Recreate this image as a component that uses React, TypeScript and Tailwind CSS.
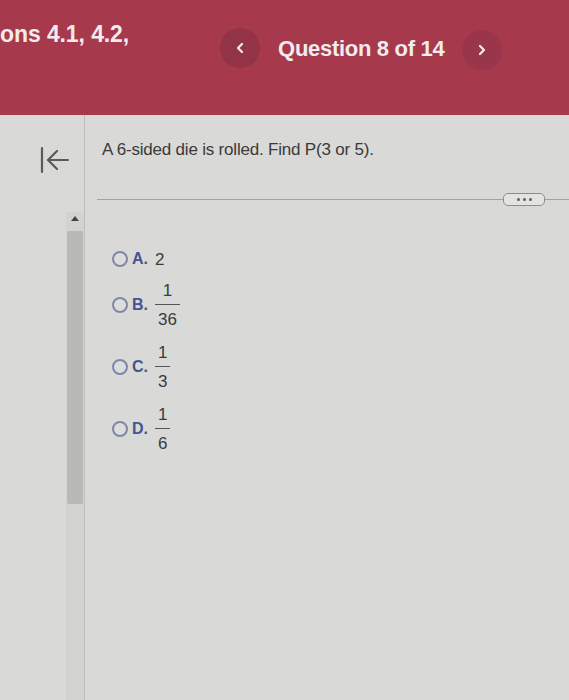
import React from 'react';

function Fraction({ num, den }: { num: string; den: string }) {
  return (
    <span className="inline-flex flex-col items-center leading-none text-[17px] text-[#3b3b3b]">
      <span className="px-[3px] pb-[5px]">{num}</span>
      <span className="self-stretch h-px bg-[#555]" />
      <span className="px-[3px] pt-[6px]">{den}</span>
    </span>
  );
}

function Option({ letter, children }: { letter: string; children: React.ReactNode }) {
  return (
    <div className="flex items-center">
      <span className="w-[16px] h-[16px] rounded-full border-2 border-[#7f86a8] bg-[#dcdcdb]" />
      <span className="ml-[4px] w-[23px] text-[16px] font-bold text-[#44558f]">{letter}.</span>
      {children}
    </div>
  );
}

export default function App() {
  return (
    <div className="w-[569px] h-[700px] overflow-hidden bg-[#d9d9d7] flex flex-col" style={{ fontFamily: '"Liberation Sans", Arial, sans-serif' }}>
      {/* Header */}
      <header className="h-[115px] shrink-0 bg-[#a7394d] flex items-start text-[#f3ecee]">
        <div className="pt-[17px] text-[23px] font-bold whitespace-nowrap tracking-[-0.1px]">ons 4.1, 4.2,</div>
        <div className="ml-[91px] mt-[26px] flex items-center">
          <button className="w-[40px] h-[40px] rounded-full bg-[#933348] flex items-center justify-center">
            <svg width="10" height="12" viewBox="0 0 10 12" fill="none" stroke="#f3ecee" strokeWidth={2.2} strokeLinecap="round" strokeLinejoin="round">
              <path d="M7 2L3 6l4 4" />
            </svg>
          </button>
          <span className="ml-[18px] text-[22px] font-bold tracking-[-0.3px]">Question 8 of 14</span>
          <button className="ml-[18px] mt-[4px] w-[40px] h-[40px] rounded-full bg-[#9a364b] flex items-center justify-center">
            <svg width="10" height="12" viewBox="0 0 10 12" fill="none" stroke="#f3ecee" strokeWidth={2.2} strokeLinecap="round" strokeLinejoin="round">
              <path d="M3 2l4 4-4 4" />
            </svg>
          </button>
        </div>
      </header>

      <div className="flex flex-1">
        {/* Left rail */}
        <aside className="w-[85px] shrink-0 border-r border-[#bdbdbb] flex flex-col items-end">
          <div className="w-full pl-[40px] pt-[31px]">
            <svg width="30" height="28" viewBox="0 0 30 28" fill="none" stroke="#5a5a5a" strokeWidth={2.2} strokeLinecap="round" strokeLinejoin="round">
              <path d="M2 2v24" />
              <path d="M28 14H8" />
              <path d="M17 5l-9 9 9 9" />
            </svg>
          </div>
          <div className="mt-[38px] w-[18px] flex-1 flex flex-col items-center bg-[#d3d3d1]">
            <svg width="8" height="6" viewBox="0 0 8 6" className="mt-[3px]">
              <path d="M0 6L4 1l4 5z" fill="#444" />
            </svg>
            <div className="mt-[10px] w-[16px] h-[273px] rounded-[2px] bg-[#b9b9b7]" />
          </div>
        </aside>

        {/* Content */}
        <main className="flex-1 pt-[22px]">
          <p className="pl-[17px] text-[17px] text-[#3a3a3a] tracking-[-0.2px]">A 6-sided die is rolled. Find P(3 or 5).</p>
          <div className="mt-[30px] ml-[12px] flex items-center">
            <div className="flex-1 h-px bg-[#a2a2a0]" />
            <div className="w-[42px] h-[13px] rounded-[5px] border border-[#8d8d8d] bg-[#e3e3e1] flex items-center justify-center gap-[3px]">
              <span className="w-[3px] h-[3px] rounded-full bg-[#606060]" />
              <span className="w-[3px] h-[3px] rounded-full bg-[#606060]" />
              <span className="w-[3px] h-[3px] rounded-full bg-[#606060]" />
            </div>
            <div className="w-[24px] h-px bg-[#a2a2a0]" />
          </div>

          <div className="pl-[27px] mt-[41px] flex flex-col gap-[16px]">
            <div className="mb-[-6px]">
              <Option letter="A">
                <span className="text-[17px] text-[#3b3b3b]">2</span>
              </Option>
            </div>
            <Option letter="B">
              <Fraction num="1" den="36" />
            </Option>
            <Option letter="C">
              <Fraction num="1" den="3" />
            </Option>
            <Option letter="D">
              <Fraction num="1" den="6" />
            </Option>
          </div>
        </main>
      </div>
    </div>
  );
}
